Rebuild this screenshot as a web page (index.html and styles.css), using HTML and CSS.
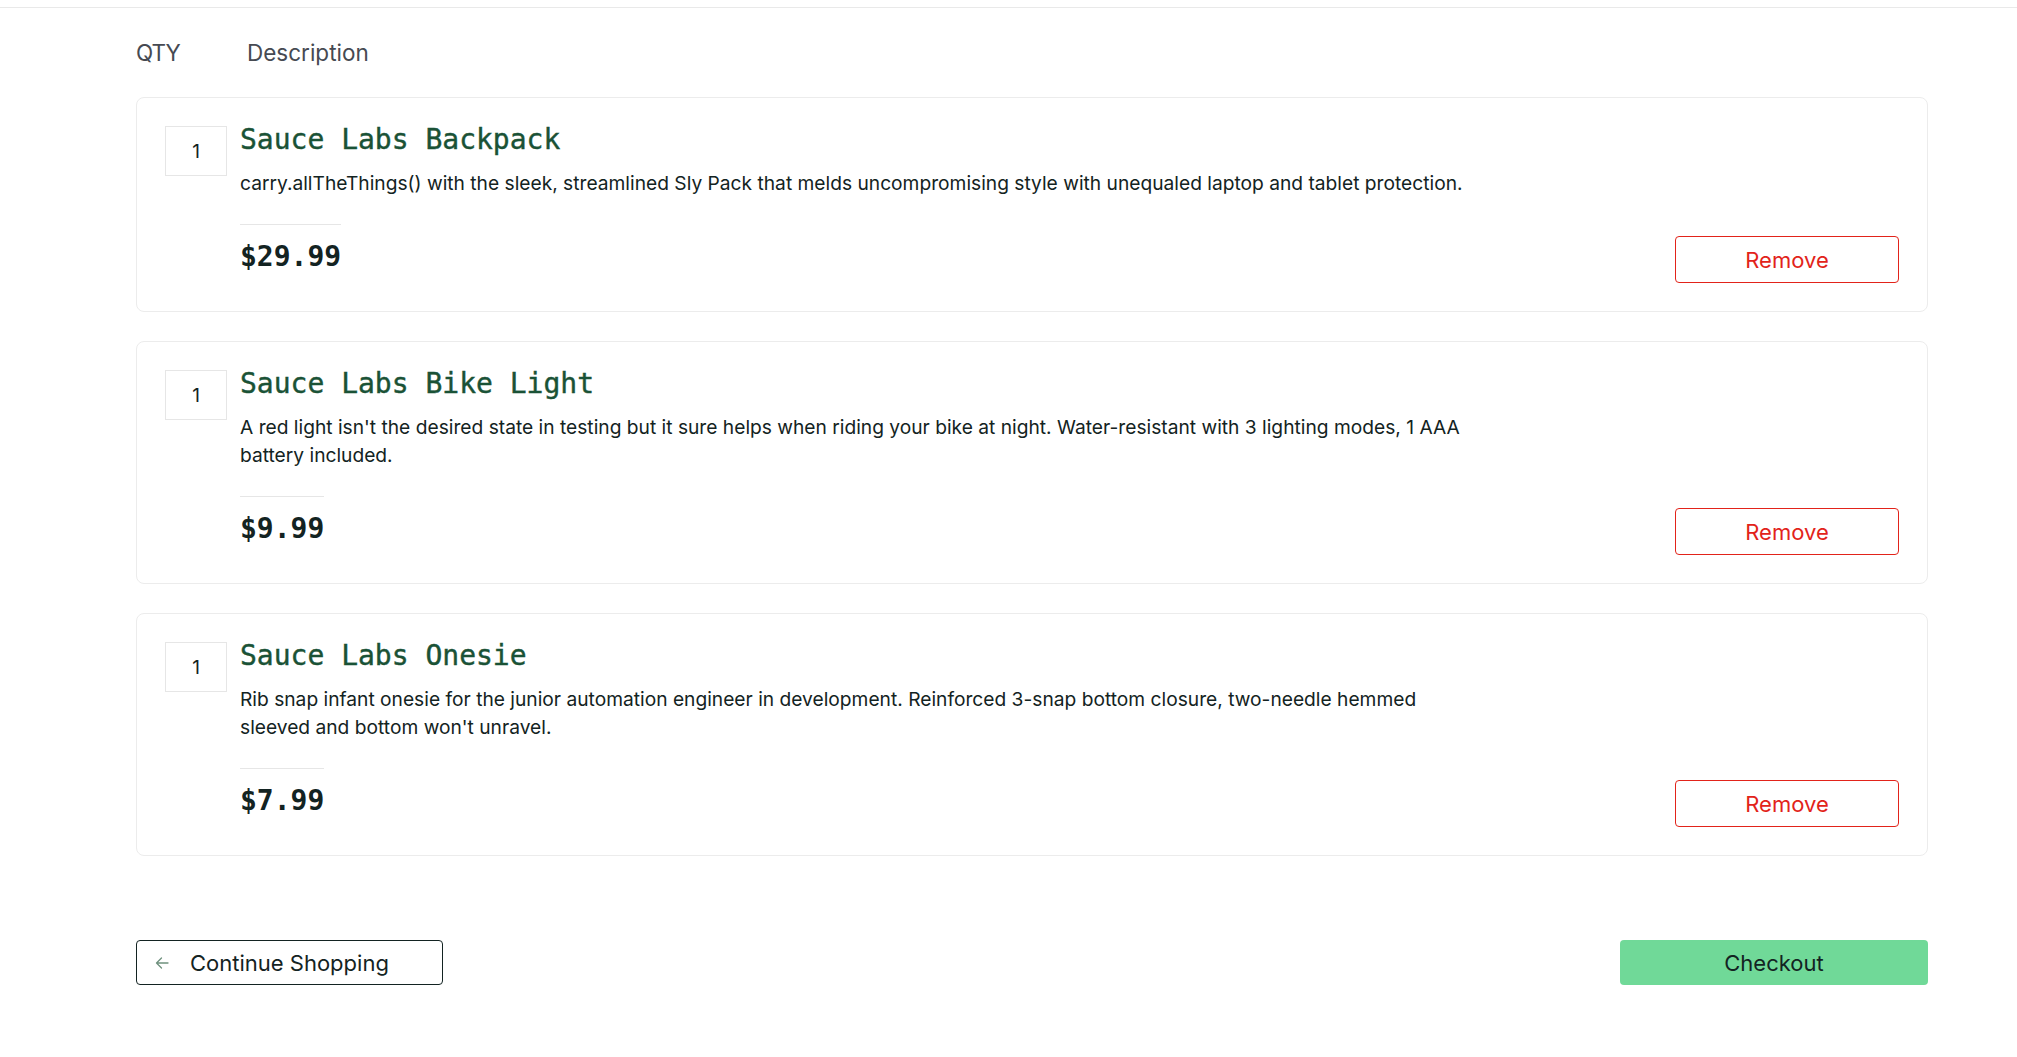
FILE: index.html
```html
<!DOCTYPE html>
<html lang="en">
<head>
<meta charset="utf-8">
<title>Your Cart</title>
<link rel="stylesheet" href="styles.css">
</head>
<body>
<div class="topbar"></div>
<main class="cart">
  <div class="cart-head">
    <span class="qty-label">QTY</span>
    <span class="desc-label">Description</span>
  </div>
  <div class="cart-list">
    <div class="item">
      <div class="qty">1</div>
      <div class="details">
        <div class="name">Sauce Labs Backpack</div>
        <div class="desc">carry.allTheThings() with the sleek, streamlined Sly Pack that melds uncompromising style with unequaled laptop and tablet protection.</div>
        <div class="bar">
          <div class="price">$29.99</div>
          <button class="remove">Remove</button>
        </div>
      </div>
    </div>
    <div class="item">
      <div class="qty">1</div>
      <div class="details">
        <div class="name">Sauce Labs Bike Light</div>
        <div class="desc">A red light isn't the desired state in testing but it sure helps when riding your bike at night. Water-resistant with 3 lighting modes, 1 AAA battery included.</div>
        <div class="bar">
          <div class="price">$9.99</div>
          <button class="remove">Remove</button>
        </div>
      </div>
    </div>
    <div class="item">
      <div class="qty">1</div>
      <div class="details">
        <div class="name">Sauce Labs Onesie</div>
        <div class="desc">Rib snap infant onesie for the junior automation engineer in development. Reinforced 3-snap bottom closure, two-needle hemmed sleeved and bottom won't unravel.</div>
        <div class="bar">
          <div class="price">$7.99</div>
          <button class="remove">Remove</button>
        </div>
      </div>
    </div>
  </div>
  <div class="footer">
    <button class="continue">
      <svg class="arrow" width="14" height="12" viewBox="0 0 14 12"><path d="M13 6H1.5M6.5 1L1.5 6L6.5 11" fill="none" stroke="#6f917e" stroke-width="1.3" stroke-linecap="round" stroke-linejoin="round"/></svg>
      <span>Continue Shopping</span>
    </button>
    <button class="checkout">Checkout</button>
  </div>
</main>
</body>
</html>
```

FILE: styles.css
```css
* { box-sizing: border-box; }
html, body { margin: 0; padding: 0; background: #fff; }
body {
  font-family: Inter, "DejaVu Sans", sans-serif;
  color: #132322;
}
.topbar {
  height: 8px;
  border-bottom: 1px solid #e9e9e9;
}
.cart {
  margin-left: 136px;
  width: 1792px;
}
.cart-head {
  display: flex;
  margin-top: 31px;
  font-size: 22.5px;
  line-height: 28px;
  color: #464a52;
}
.qty-label { width: 111px; letter-spacing: -1px; }
.cart-list {
  margin-top: 30px;
  display: flex;
  flex-direction: column;
  gap: 29px;
}
.item {
  display: flex;
  gap: 13px;
  border: 1px solid #ececec;
  border-radius: 8px;
  padding: 28px;
}
.qty {
  flex: none;
  width: 62px;
  height: 50px;
  border: 1px solid #e6e6e6;
  display: flex;
  align-items: center;
  justify-content: center;
  font-size: 19px;
  color: #132322;
}
.details {
  flex: 1;
  display: flex;
  flex-direction: column;
}
.name {
  font-family: "DejaVu Sans Mono", monospace;
  font-size: 28px;
  line-height: 28px;
  color: #1a5236;
  -webkit-text-stroke: 0.4px #1a5236;
}
.desc {
  margin-top: 15px;
  max-width: 1236px;
  font-size: 19.2px;
  line-height: 28px;
  color: #132322;
}
.bar {
  margin-top: 27px;
  display: flex;
  justify-content: space-between;
  align-items: flex-end;
}
.price {
  border-top: 1px solid #e6e6e6;
  padding: 18px 0 12px;
  font-family: "DejaVu Sans Mono", monospace;
  font-weight: bold;
  font-size: 28px;
  line-height: 28px;
  color: #132322;
}
.remove {
  width: 224px;
  height: 47px;
  border: 1px solid #e2231a;
  border-radius: 4px;
  background: #fff;
  color: #e2231a;
  font-family: Inter, sans-serif;
  font-size: 22px;
  cursor: pointer;
}
.footer {
  margin-top: 84px;
  display: flex;
  justify-content: space-between;
}
.continue {
  width: 307px;
  height: 45px;
  display: flex;
  align-items: center;
  gap: 21px;
  padding: 0 0 0 18px;
  border: 1px solid #132322;
  border-radius: 4px;
  background: #fff;
  color: #132322;
  font-family: Inter, sans-serif;
  font-size: 22px;
}
.arrow { flex: none; }
.checkout {
  width: 308px;
  height: 45px;
  border: none;
  border-radius: 4px;
  background: #70d998;
  color: #132322;
  font-family: Inter, sans-serif;
  font-size: 22px;
}
```
